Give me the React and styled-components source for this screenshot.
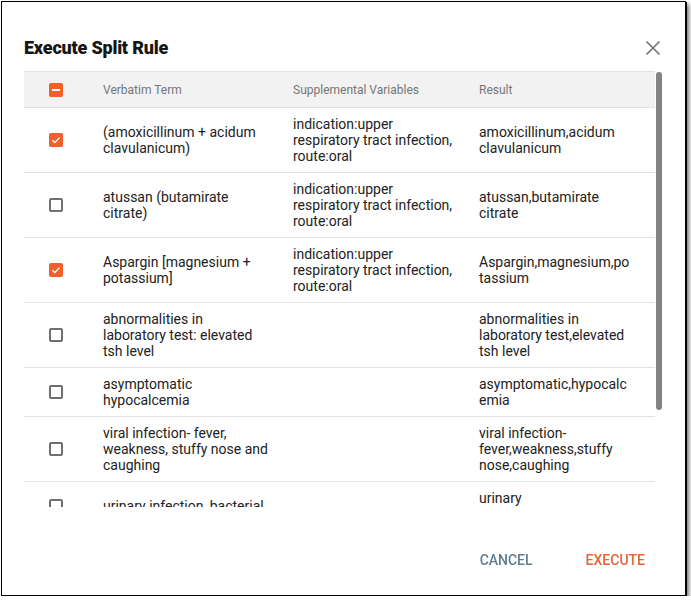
import React from "react";
import styled, { createGlobalStyle } from "styled-components";

const Global = createGlobalStyle`
  html, body {
    margin: 0;
    padding: 0;
    background: #ffffff;
    font-family: Roboto, "Liberation Sans", Arial, sans-serif;
  }
  * { box-sizing: border-box; }
`;

const ORANGE = "#f15f2b";

const Frame = styled.div`
  margin: 1px 0 0 1px;
  width: 685px;
  height: 595px;
  background: #fff;
  border: 1px solid #000;
  box-shadow: 1px 1px 0 #000, 3px 3px 4px rgba(0, 0, 0, 0.55);
  display: flex;
  flex-direction: column;
`;

const Header = styled.div`
  display: flex;
  align-items: center;
  justify-content: space-between;
  padding: 22px 24px 0 22px;
  height: 69px;
`;

const Title = styled.h2`
  margin: 0;
  font-size: 18px;
  line-height: 24px;
  font-weight: 900;
  color: #161616;
  letter-spacing: -0.2px;
`;

const CloseButton = styled.button`
  border: 0;
  background: transparent;
  padding: 0;
  width: 16px;
  height: 16px;
  display: flex;
  align-items: center;
  justify-content: center;
  cursor: pointer;
`;

const TableArea = styled.div`
  margin: 0 22px;
  height: 438px;
  display: flex;
`;

const Viewport = styled.div`
  flex: 1;
  min-width: 0;
  height: 436px;
  overflow-y: auto;
  overflow-x: hidden;
  scrollbar-width: none;
  &::-webkit-scrollbar {
    display: none;
  }
`;

const Track = styled.div`
  width: 8px;
  padding: 1px;
  display: flex;
  flex-direction: column;
`;

const Thumb = styled.div`
  height: 338px;
  border-radius: 3px;
  background: #838383;
`;

const Row = styled.div`
  display: grid;
  grid-template-columns: 64px 190px 186px 1fr;
  align-items: center;
  border-bottom: 1px solid #e2e2e2;
  background: ${(p) => (p.$head ? "#f2f2f2" : "#fff")};
  border-top: ${(p) => (p.$head ? "1px solid #e2e2e2" : "0")};
  min-height: ${(p) => (p.$head ? "37px" : "auto")};
`;

const CheckCell = styled.div`
  display: flex;
  justify-content: center;
  align-items: center;
`;

const Cell = styled.div`
  padding: 8px ${(p) => p.$pr}px 8px 15px;
  font-size: 14px;
  line-height: 16px;
  color: #222;
  overflow-wrap: anywhere;
`;

const HeadCell = styled.div`
  padding: 0 8px 0 15px;
  font-size: 12px;
  line-height: 16px;
  color: #767676;
`;

const Box = styled.span`
  width: 14px;
  height: 14px;
  border-radius: 2px;
  display: inline-flex;
  align-items: center;
  justify-content: center;
  background: ${(p) => (p.$on ? ORANGE : "#fff")};
  border: ${(p) => (p.$on ? "0" : "2px solid #707070")};
`;

const Footer = styled.div`
  display: flex;
  justify-content: flex-end;
  align-items: center;
  gap: 21px;
  padding: 33px 24px 0 0;
`;

const ActionButton = styled.button`
  height: 36px;
  padding: 0 16px;
  border: 0;
  background: transparent;
  font-family: Roboto, "Liberation Sans", Arial, sans-serif;
  font-size: 14px;
  font-weight: 500;
  text-transform: uppercase;
  color: ${(p) => p.$color};
  cursor: pointer;
`;

function Checkbox({ state }) {
  if (state === "mixed") {
    return (
      <Box $on>
        <svg width="14" height="14" viewBox="0 0 14 14">
          <rect x="3" y="6" width="8" height="2" fill="#fff" />
        </svg>
      </Box>
    );
  }
  if (state) {
    return (
      <Box $on>
        <svg width="14" height="14" viewBox="0 0 14 14">
          <path d="M3.4 7.2 L5.8 9.5 L10.6 4.6" fill="none" stroke="#fff" strokeWidth="1.3" />
        </svg>
      </Box>
    );
  }
  return <Box />;
}

const SUPP = "indication:upper respiratory tract infection, route:oral";

const rows = [
  { on: true, term: "(amoxicillinum + acidum clavulanicum)", supp: SUPP, result: "amoxicillinum,acidum clavulanicum" },
  { on: false, term: "atussan (butamirate citrate)", supp: SUPP, result: "atussan,butamirate citrate" },
  { on: true, term: "Aspargin [magnesium + potassium]", supp: SUPP, result: "Aspargin,magnesium,potassium" },
  { on: false, term: "abnormalities in laboratory test: elevated tsh level", supp: "", result: "abnormalities in laboratory test,elevated tsh level" },
  { on: false, term: "asymptomatic hypocalcemia", supp: "", result: "asymptomatic,hypocalcemia" },
  { on: false, term: "viral infection- fever, weakness, stuffy nose and caughing", supp: "", result: "viral infection-fever,weakness,stuffy nose,caughing" },
  { on: false, term: "urinary infection, bacterial", supp: "", result: "urinary infection,bacterial" },
  { on: false, term: "acute bronchitis (cough, fever and chest pain)", supp: "", result: "acute bronchitis,cough,fever,chest pain" },
  { on: false, term: "nausea and vomiting", supp: "", result: "nausea,vomiting" },
];

export default function App() {
  return (
    <>
      <Global />
      <Frame>
        <Header>
          <Title>Execute Split Rule</Title>
          <CloseButton aria-label="close">
            <svg width="16" height="16" viewBox="0 0 16 16">
              <path d="M1.5 1.5 L14.5 14.5 M14.5 1.5 L1.5 14.5" stroke="#757575" strokeWidth="1.7" />
            </svg>
          </CloseButton>
        </Header>
        <TableArea>
          <Viewport>
            <Row $head>
              <CheckCell>
                <Checkbox state="mixed" />
              </CheckCell>
              <HeadCell>Verbatim Term</HeadCell>
              <HeadCell>Supplemental Variables</HeadCell>
              <HeadCell>Result</HeadCell>
            </Row>
            {rows.map((r, i) => (
              <Row key={i}>
                <CheckCell>
                  <Checkbox state={r.on} />
                </CheckCell>
                <Cell $pr={9.4}>{r.term}</Cell>
                <Cell $pr={7}>{r.supp}</Cell>
                <Cell $pr={22}>{r.result}</Cell>
              </Row>
            ))}
          </Viewport>
          <Track>
            <Thumb />
          </Track>
        </TableArea>
        <Footer>
          <ActionButton $color="#5f7d8c">Cancel</ActionButton>
          <ActionButton $color="#e8643a">Execute</ActionButton>
        </Footer>
      </Frame>
    </>
  );
}
